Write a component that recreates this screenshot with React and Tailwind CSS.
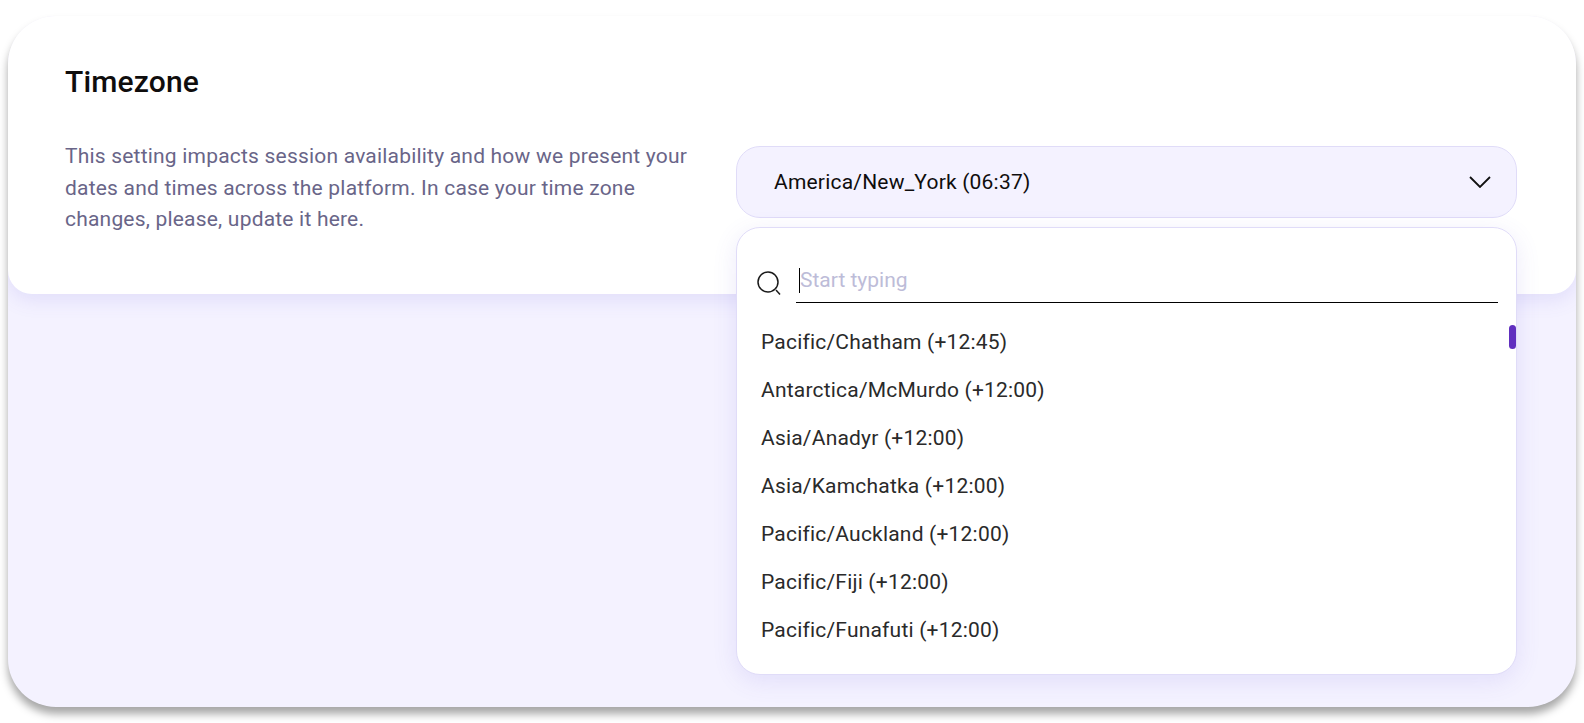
import React from 'react';

const zones = [
  'Pacific/Chatham (+12:45)',
  'Antarctica/McMurdo (+12:00)',
  'Asia/Anadyr (+12:00)',
  'Asia/Kamchatka (+12:00)',
  'Pacific/Auckland (+12:00)',
  'Pacific/Fiji (+12:00)',
  'Pacific/Funafuti (+12:00)',
];

export default function App() {
  return (
    <div className="h-[723px] w-full overflow-hidden bg-white px-2 pt-4 font-['Roboto',sans-serif]">
      <div className="h-[691px] overflow-hidden rounded-[48px] bg-[#f4f2ff] shadow-[0_7px_8px_rgba(0,0,0,0.35)]">
        {/* Settings card */}
        <div className="h-[278px] rounded-b-[24px] bg-white pl-[57px] pr-[59px] pt-[46px] shadow-[0_6px_20px_rgba(101,85,214,0.13)]">
          <h2 className="text-[30px] font-medium leading-[40px] tracking-[0.15px] text-[#0f0d0d]">Timezone</h2>
          <div className="mt-[39px] flex justify-between">
            <p className="w-[640px] text-[21px] leading-[31.5px] tracking-[0.2px] text-[#696588]">
              This setting impacts session availability and how we present your dates and times across the platform. In case your time zone changes, please, update it here.
            </p>

            <div className="relative mt-[5px] w-[781px]">
              <button className="flex h-[72px] w-full items-center justify-between rounded-[24px] border border-[#e0dcf8] bg-[#f4f2ff] pl-[37px] pr-[25px] text-[21px] tracking-[0.2px] text-[#0f0d0d]">
                <span className="mt-[2px]">America/New_York (06:37)</span>
                <svg width="22" height="12" viewBox="0 0 22 12" fill="none" stroke="#111" strokeWidth="1.8">
                  <path d="M1 1l10 10L21 1" />
                </svg>
              </button>

              {/* Open dropdown */}
              <div className="absolute left-0 top-[81px] h-[448px] w-full rounded-[24px] border border-[#e0dcf8] bg-white shadow-[0_6px_24px_rgba(101,85,214,0.12)]">
                <div className="flex items-center pl-[20px] pr-[18px] pt-[31px]">
                  <svg width="24" height="25" viewBox="0 0 24 25" fill="none" stroke="#1a1a1a" strokeWidth="1.5" className="mt-[5px] shrink-0">
                    <circle cx="11" cy="11" r="10" />
                    <path d="M19 19l4 4.5" />
                  </svg>
                  <div className="ml-[15px] flex h-[44px] flex-1 items-center border-b border-black pl-[3px]">
                    <span className="h-[25px] w-px bg-black" />
                    <span className="text-[21px] text-[#bdbcd8]">Start typing</span>
                  </div>
                </div>

                <ul className="mt-[16px]">
                  {zones.map((z) => (
                    <li key={z} className="flex h-[48px] items-center pl-[24px] text-[21px] tracking-[0.2px] text-[#2a2a2a]">{z}</li>
                  ))}
                </ul>

                <div className="absolute right-0 top-[97px] h-[24px] w-[7px] rounded-full bg-[#602fbf]" />
              </div>
            </div>
          </div>
        </div>
      </div>
    </div>
  );
}
